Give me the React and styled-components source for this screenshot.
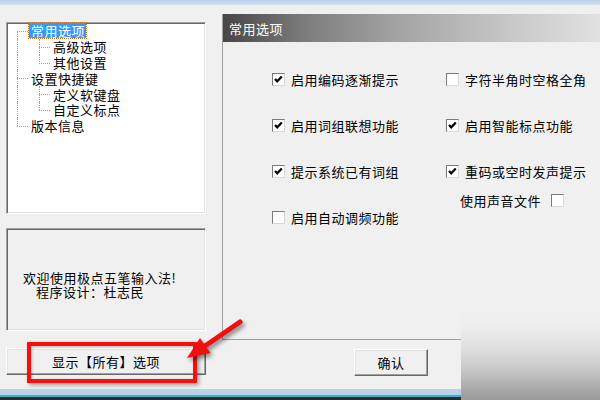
import React from 'react';
import styled, { createGlobalStyle } from 'styled-components';

const Global = createGlobalStyle`
  html, body { margin: 0; padding: 0; }
  body {
    width: 600px; height: 400px; overflow: hidden; background: #f0f0f0;
    font-family: "Noto Sans CJK SC", "DejaVu Sans", sans-serif;
    font-size: 13px; color: #000;
  }
`;

const Screen = styled.div`
  position: relative;
  width: 600px;
  height: 400px;
  display: flex;
  flex-direction: column;
  background: #f0f0f0;
  overflow: hidden;
`;

const TopStrip = styled.div`
  height: 5px;
  background: linear-gradient(#bad0e8, #d3e2f1);
`;

const Main = styled.div`
  flex: 1;
  display: flex;
  padding-left: 6px;
  min-height: 0;
`;

const LeftCol = styled.div`
  width: 200px;
  display: flex;
  flex-direction: column;
`;

const sunken = `
  border-style: solid;
  border-width: 1px;
  border-color: #a0a0a0 #ffffff #ffffff #a0a0a0;
  box-shadow: inset 1px 1px 0 #696969, inset -1px -1px 0 #e3e3e3;
`;

const Tree = styled.div`
  margin-top: 17px;
  height: 192px;
  box-sizing: border-box;
  background: #fff;
  ${sunken}
  letter-spacing: 0.5px;
`;

const TreeRow = styled.div`
  position: relative;
  height: 15.8px;
  display: flex;
  align-items: center;
  padding-left: ${(p) => (p.$level === 2 ? 44 : 22)}px;
  white-space: nowrap;
  line-height: 15px;
`;

const VLine = styled.span`
  position: absolute;
  left: ${(p) => p.$x}px;
  top: ${(p) => (p.$start ? 8 : 0)}px;
  bottom: ${(p) => (p.$end ? 8 : 0)}px;
  border-left: 1px dotted #a0a0a0;
`;

const HLine = styled.span`
  position: absolute;
  left: ${(p) => p.$x}px;
  width: ${(p) => p.$w}px;
  top: 8px;
  border-top: 1px dotted #a0a0a0;
`;

const TreeLabel = styled.span`
  display: inline-block;
  padding: 0 1px 0 2px;
  height: 15px;
  line-height: 15px;
  color: ${(p) => (p.$selected ? '#fff' : '#000')};
  background: ${(p) => (p.$selected ? '#3399ff' : 'transparent')};
  outline: ${(p) => (p.$selected ? '1px dotted #c07020' : 'none')};
`;

const InfoBox = styled.div`
  margin-top: 14px;
  height: 103px;
  box-sizing: border-box;
  ${sunken}
  padding-top: 42px;
  line-height: 13.5px;
  letter-spacing: 0.5px;
`;

const InfoLine = styled.div`
  padding-left: ${(p) => p.$indent}px;
  white-space: nowrap;
`;

const ButtonWrap = styled.div`
  position: relative;
  margin-top: 17px;
  display: flex;
`;

const WinButton = styled.button`
  width: ${(p) => p.$w}px;
  height: 27px;
  box-sizing: border-box;
  background: #f0f0f0;
  font-family: inherit;
  font-size: 13px;
  letter-spacing: 0.5px;
  color: #000;
  padding: 0;
  border-style: solid;
  border-width: 1px;
  border-color: #ffffff #696969 #696969 #ffffff;
  box-shadow: inset -1px -1px 0 #a0a0a0, inset 1px 1px 0 #e3e3e3;
`;

const Highlight = styled.div`
  position: absolute;
  left: 21px;
  top: -6px;
  width: 170px;
  height: 41px;
  box-sizing: border-box;
  border: 4px solid #f21010;
  box-shadow: 2px 2px 4px rgba(0, 0, 0, 0.35), inset 1px 1px 3px rgba(0, 0, 0, 0.25);
  pointer-events: none;
`;

const RightCol = styled.div`
  margin-left: 16px;
  flex: 1;
  display: flex;
  flex-direction: column;
`;

const Panel = styled.div`
  margin-top: 9px;
  height: 326px;
  box-sizing: border-box;
  border-left: 1px solid #a0a0a0;
  border-bottom: 1px solid #a0a0a0;
  display: flex;
  flex-direction: column;
`;

const PanelHeader = styled.div`
  height: 28px;
  display: flex;
  align-items: center;
  padding-left: 6px;
  color: #fff;
  letter-spacing: 0.5px;
  background: linear-gradient(to right, #464646 0%, #7e7e7e 22%, #a2a2a2 45%, #bcbcbc 65%, #d2d2d2 85%, #e2e2e2 100%);
`;

const Options = styled.div`
  display: flex;
  padding: 29px 0 0 49px;
`;

const OptionCol = styled.div`
  width: ${(p) => p.$w}px;
  display: flex;
  flex-direction: column;
  gap: 30px;
`;

const OptionRow = styled.label`
  height: 16px;
  display: flex;
  align-items: center;
  gap: ${(p) => p.$gap ?? 6}px;
  padding-left: ${(p) => p.$indent ?? 0}px;
  margin-top: ${(p) => p.$mt ?? 0}px;
  white-space: nowrap;
  letter-spacing: 0.5px;
`;

const SubGroup = styled.div`
  display: flex;
  flex-direction: column;
`;

const Box = styled.span`
  width: 13px;
  height: 13px;
  box-sizing: border-box;
  background: #fff;
  border: 1px solid;
  border-color: #7a7a7a #d8d8d8 #d8d8d8 #7a7a7a;
  display: inline-flex;
  flex: none;
`;

const Footer = styled.div`
  display: flex;
  padding: 9px 0 0 132px;
`;

const BottomStrip = styled.div`
  height: 11px;
  background: linear-gradient(#bcd4ea 0px, #b8d0e8 6px, #33b4cc 6px, #33b4cc 8px, #2a2a2a 8px);
`;

const CornerShade = styled.div`
  position: absolute;
  right: 0;
  bottom: 0;
  width: 139px;
  height: 100px;
  background: linear-gradient(#f1f1f1 0%, #eeeeee 25%, #dedede 50%, #c4c4c4 72%, #a8a8a8 90%, #9a9a9a 100%);
`;

const ArrowSvg = styled.svg`
  position: absolute;
  left: 180px;
  top: 312px;
  filter: drop-shadow(2px 3px 2px rgba(0, 0, 0, 0.45));
  pointer-events: none;
`;

function CheckBox({ checked }) {
  return (
    <Box>
      {checked && (
        <svg width="11" height="11" viewBox="0 0 11 11">
          <polyline points="2,5 4.2,7.3 8.8,2.5" fill="none" stroke="#000" strokeWidth="2.2" />
        </svg>
      )}
    </Box>
  );
}

const treeItems = [
  { label: '常用选项', level: 1, selected: true, trunk: { start: true }, branch: null },
  { label: '高级选项', level: 2, trunk: {}, branch: { start: true } },
  { label: '其他设置', level: 2, trunk: {}, branch: { end: true } },
  { label: '设置快捷键', level: 1, trunk: {}, branch: null },
  { label: '定义软键盘', level: 2, trunk: {}, branch: { start: true } },
  { label: '自定义标点', level: 2, trunk: {}, branch: { end: true } },
  { label: '版本信息', level: 1, trunk: { end: true }, branch: null },
];

const col1 = [
  { label: '启用编码逐渐提示', checked: true },
  { label: '启用词组联想功能', checked: true },
  { label: '提示系统已有词组', checked: true },
  { label: '启用自动调频功能', checked: false },
];

const col2 = [
  { label: '字符半角时空格全角', checked: false },
  { label: '启用智能标点功能', checked: true },
  { label: '重码或空时发声提示', checked: true },
];

export default function App() {
  return (
    <>
      <Global />
      <Screen>
        <TopStrip />
        <Main>
          <LeftCol>
            <Tree>
              {treeItems.map((it) => (
                <TreeRow key={it.label} $level={it.level}>
                  <VLine $x={10} $start={it.trunk.start} $end={it.trunk.end} />
                  {it.branch && <VLine $x={32} $start={false} $end={it.branch.end} />}
                  {it.level === 1 ? <HLine $x={10} $w={11} /> : <HLine $x={32} $w={11} />}
                  <TreeLabel $selected={it.selected}>{it.label}</TreeLabel>
                </TreeRow>
              ))}
            </Tree>
            <InfoBox>
              <InfoLine $indent={16}>欢迎使用极点五笔输入法!</InfoLine>
              <InfoLine $indent={29}>程序设计：杜志民</InfoLine>
            </InfoBox>
            <ButtonWrap>
              <WinButton $w={200}>显示【所有】选项</WinButton>
              <Highlight />
            </ButtonWrap>
          </LeftCol>
          <RightCol>
            <Panel>
              <PanelHeader>常用选项</PanelHeader>
              <Options>
                <OptionCol $w={174}>
                  {col1.map((o) => (
                    <OptionRow key={o.label}>
                      <CheckBox checked={o.checked} />
                      {o.label}
                    </OptionRow>
                  ))}
                </OptionCol>
                <OptionCol $w={160}>
                  {col2.slice(0, 2).map((o) => (
                    <OptionRow key={o.label}>
                      <CheckBox checked={o.checked} />
                      {o.label}
                    </OptionRow>
                  ))}
                  <SubGroup>
                    <OptionRow>
                      <CheckBox checked={col2[2].checked} />
                      {col2[2].label}
                    </OptionRow>
                    <OptionRow $indent={14} $mt={13} $gap={10}>
                      使用声音文件
                      <CheckBox checked={false} />
                    </OptionRow>
                  </SubGroup>
                </OptionCol>
              </Options>
            </Panel>
            <Footer>
              <WinButton $w={74}>确认</WinButton>
            </Footer>
          </RightCol>
        </Main>
        <BottomStrip />
        <CornerShade />
        <ArrowSvg width="70" height="56" viewBox="180 312 70 56">
          <line x1="240" y1="322" x2="205" y2="346" stroke="#f01010" strokeWidth="5" strokeLinecap="round" />
          <polygon points="187,358 200,338 210.5,353" fill="#f01010" />
        </ArrowSvg>
      </Screen>
    </>
  );
}
